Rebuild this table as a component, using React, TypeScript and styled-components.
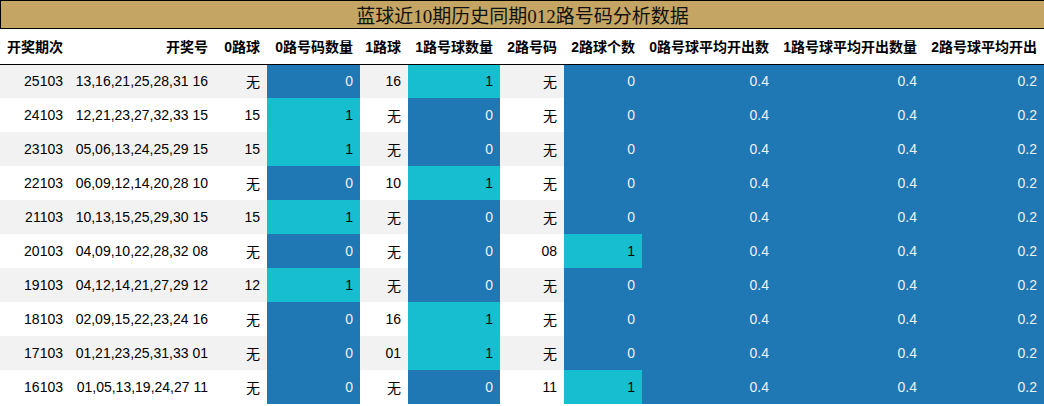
import * as React from 'react';
import styled, { createGlobalStyle, css } from 'styled-components';

const GlobalStyle = createGlobalStyle`
  html, body {
    margin: 0;
    padding: 0;
    background: #ffffff;
    overflow: hidden;
  }
  body {
    font-family: 'Liberation Sans', 'Noto Sans CJK SC', sans-serif;
  }
`;

type Tone = 'plain' | 'blue' | 'cyan';

const COLS = [70, 145, 52, 93, 48, 92, 64, 78, 134, 148, 120];

const HEADERS = [
  '开奖期次',
  '开奖号',
  '0路球',
  '0路号码数量',
  '1路球',
  '1路号球数量',
  '2路号码',
  '2路球个数',
  '0路号球平均开出数',
  '1路号球平均开出数量',
  '2路号球平均开出',
];

const ROWS: string[][] = [
  ['25103', '13,16,21,25,28,31 16', '无', '0', '16', '1', '无', '0'],
  ['24103', '12,21,23,27,32,33 15', '15', '1', '无', '0', '无', '0'],
  ['23103', '05,06,13,24,25,29 15', '15', '1', '无', '0', '无', '0'],
  ['22103', '06,09,12,14,20,28 10', '无', '0', '10', '1', '无', '0'],
  ['21103', '10,13,15,25,29,30 15', '15', '1', '无', '0', '无', '0'],
  ['20103', '04,09,10,22,28,32 08', '无', '0', '无', '0', '08', '1'],
  ['19103', '04,12,14,21,27,29 12', '12', '1', '无', '0', '无', '0'],
  ['18103', '02,09,15,22,23,24 16', '无', '0', '16', '1', '无', '0'],
  ['17103', '01,21,23,25,31,33 01', '无', '0', '01', '1', '无', '0'],
  ['16103', '01,05,13,19,24,27 11', '无', '0', '无', '0', '11', '1'],
];

const AVERAGES = ['0.4', '0.4', '0.2'];
const COUNT_COLS = [3, 5, 7];

const Page = styled.div`
  width: 1044px;
`;

const TitleBar = styled.div`
  height: 27px;
  border: 1px solid #000;
  border-right: none;
  background: #c4a563;
  display: flex;
  align-items: center;
  justify-content: center;
  font-family: 'Liberation Serif', 'Noto Sans CJK SC', serif;
  font-size: 19px;
  color: #111;
`;

const Table = styled.table`
  width: 1044px;
  table-layout: fixed;
  border-collapse: collapse;
  border-spacing: 0;
`;

const HeadCell = styled.th`
  height: 35px;
  padding: 0 7px 0 0;
  text-align: right;
  font-size: 14px;
  font-weight: bold;
  color: #000;
  white-space: nowrap;
  overflow: hidden;
  border-bottom: 1px solid #000;
  box-sizing: border-box;
`;

const Row = styled.tr<{ $striped: boolean }>`
  background: ${({ $striped }) => ($striped ? '#f2f2f2' : '#ffffff')};
`;

const Cell = styled.td<{ $tone: Tone }>`
  height: 34px;
  padding: 0 7px 0 0;
  text-align: right;
  font-size: 14px;
  white-space: nowrap;
  overflow: hidden;
  box-sizing: border-box;
  color: #000;
  ${({ $tone }) =>
    $tone === 'blue' &&
    css`
      background: #1f77b4;
      color: #f1f1f1;
    `}
  ${({ $tone }) =>
    $tone === 'cyan' &&
    css`
      background: #17becf;
      color: #000;
    `}
`;

const toneFor = (col: number, value: string): Tone => {
  if (col >= 8) return 'blue';
  if (COUNT_COLS.includes(col)) return value === '1' ? 'cyan' : 'blue';
  return 'plain';
};

export default function App() {
  return (
    <Page>
      <GlobalStyle />
      <TitleBar>蓝球近10期历史同期012路号码分析数据</TitleBar>
      <Table>
        <colgroup>
          {COLS.map((w, i) => (
            <col key={i} style={{ width: w }} />
          ))}
        </colgroup>
        <thead>
          <tr>
            {HEADERS.map((h) => (
              <HeadCell key={h}>{h}</HeadCell>
            ))}
          </tr>
        </thead>
        <tbody>
          {ROWS.map((row, r) => {
            const cells = [...row, ...AVERAGES];
            return (
              <Row key={row[0]} $striped={r % 2 === 0}>
                {cells.map((v, c) => (
                  <Cell key={c} $tone={toneFor(c, v)}>
                    {v}
                  </Cell>
                ))}
              </Row>
            );
          })}
        </tbody>
      </Table>
    </Page>
  );
}
